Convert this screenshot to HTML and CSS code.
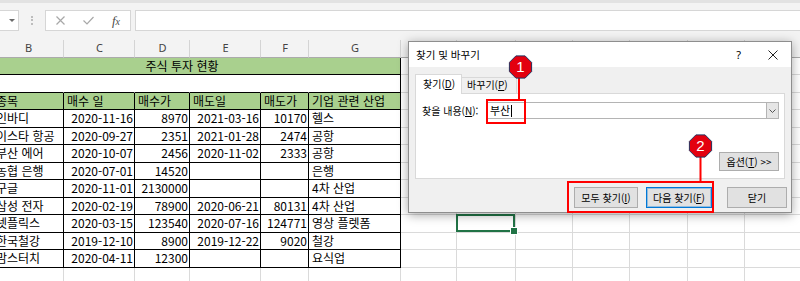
FILE: index.html
```html
<!DOCTYPE html>
<html lang="ko">
<head>
    <meta charset="UTF-8">
    <title>찾기 및 바꾸기</title>
    <link rel="stylesheet" href="styles.css">
</head>
<body>
<div class="app">
    <div class="top">
        <div class="formula-bar">
            <div class="name-box"><span class="arrow-down"></span></div>
            <div class="grip"></div>
            <div class="fx-tools">
                <span class="tool">
                    <svg width="9" height="9" viewBox="0 0 9 9"><path d="M0.5 0.5L8.5 8.5M8.5 0.5L0.5 8.5" stroke="#a8a8a8" stroke-width="1.2" fill="none"/></svg>
                </span>
                <span class="tool">
                    <svg width="11" height="9" viewBox="0 0 11 9"><path d="M0.5 4.5L4 8L10.5 1" stroke="#a8a8a8" stroke-width="1.2" fill="none"/></svg>
                </span>
                <span class="tool fx"><i>f</i><i class="fx-x">x</i></span>
            </div>
            <div class="formula-input"></div>
        </div>
    </div>

    <div class="sheet">
        <!-- column headers -->
        <div class="c colh">B</div><div class="c colh">C</div><div class="c colh">D</div><div class="c colh">E</div><div class="c colh">F</div><div class="c colh">G</div>
        <div class="c colh"></div><div class="c colh"></div><div class="c colh"></div><div class="c colh"></div><div class="c colh"></div><div class="c colh"></div><div class="c colh"></div>

        <!-- title -->
        <div class="c t green title">주식 투자 현황</div>
        <div class="c"></div><div class="c"></div><div class="c"></div><div class="c"></div><div class="c"></div><div class="c"></div><div class="c"></div>

        <!-- blank -->
        <div class="c blank"></div><div class="c blank"></div><div class="c blank"></div><div class="c blank"></div><div class="c blank"></div><div class="c blank last"></div>
        <div class="c"></div><div class="c"></div><div class="c"></div><div class="c"></div><div class="c"></div><div class="c"></div><div class="c"></div>

        <!-- table header -->
        <div class="c t green">종목</div><div class="c t green">매수 일</div><div class="c t green">매수가</div><div class="c t green">매도일</div><div class="c t green">매도가</div><div class="c t green">기업 관련 산업</div>
        <div class="c"></div><div class="c"></div><div class="c"></div><div class="c"></div><div class="c"></div><div class="c"></div><div class="c"></div>

        <div class="c t">인바디</div><div class="c t r">2020-11-16</div><div class="c t r">8970</div><div class="c t r">2021-03-16</div><div class="c t r">10170</div><div class="c t">헬스</div>
        <div class="c"></div><div class="c"></div><div class="c"></div><div class="c"></div><div class="c"></div><div class="c"></div><div class="c"></div>

        <div class="c t">이스타 항공</div><div class="c t r">2020-09-27</div><div class="c t r">2351</div><div class="c t r">2021-01-28</div><div class="c t r">2474</div><div class="c t">공항</div>
        <div class="c"></div><div class="c"></div><div class="c"></div><div class="c"></div><div class="c"></div><div class="c"></div><div class="c"></div>

        <div class="c t">부산 에어</div><div class="c t r">2020-10-07</div><div class="c t r">2456</div><div class="c t r">2020-11-02</div><div class="c t r">2333</div><div class="c t">공항</div>
        <div class="c"></div><div class="c"></div><div class="c"></div><div class="c"></div><div class="c"></div><div class="c"></div><div class="c"></div>

        <div class="c t">농협 은행</div><div class="c t r">2020-07-01</div><div class="c t r">14520</div><div class="c t r"></div><div class="c t r"></div><div class="c t">은행</div>
        <div class="c"></div><div class="c"></div><div class="c"></div><div class="c"></div><div class="c"></div><div class="c"></div><div class="c"></div>

        <div class="c t">구글</div><div class="c t r">2020-11-01</div><div class="c t r">2130000</div><div class="c t r"></div><div class="c t r"></div><div class="c t">4차 산업</div>
        <div class="c"></div><div class="c"></div><div class="c"></div><div class="c"></div><div class="c"></div><div class="c"></div><div class="c"></div>

        <div class="c t">삼성 전자</div><div class="c t r">2020-02-19</div><div class="c t r">78900</div><div class="c t r">2020-06-21</div><div class="c t r">80131</div><div class="c t">4차 산업</div>
        <div class="c"></div><div class="c"></div><div class="c"></div><div class="c"></div><div class="c"></div><div class="c"></div><div class="c"></div>

        <div class="c t">넷플릭스</div><div class="c t r">2020-03-15</div><div class="c t r">123540</div><div class="c t r">2020-07-16</div><div class="c t r">124771</div><div class="c t">영상 플렛폼</div>
        <div class="c"></div><div class="c sel"></div><div class="c"></div><div class="c"></div><div class="c"></div><div class="c"></div><div class="c"></div>

        <div class="c t">한국철강</div><div class="c t r">2019-12-10</div><div class="c t r">8900</div><div class="c t r">2019-12-22</div><div class="c t r">9020</div><div class="c t">철강</div>
        <div class="c"></div><div class="c"></div><div class="c"></div><div class="c"></div><div class="c"></div><div class="c"></div><div class="c"></div>

        <div class="c t">맘스터치</div><div class="c t r">2020-04-11</div><div class="c t r">12300</div><div class="c t r"></div><div class="c t r"></div><div class="c t">요식업</div>
        <div class="c"></div><div class="c"></div><div class="c"></div><div class="c"></div><div class="c"></div><div class="c"></div><div class="c"></div>

        <div class="c"></div><div class="c"></div><div class="c"></div><div class="c"></div><div class="c"></div><div class="c"></div>
        <div class="c"></div><div class="c"></div><div class="c"></div><div class="c"></div><div class="c"></div><div class="c"></div><div class="c"></div>
    </div>

    <div class="dialog">
        <div class="dlg-title">
            <span class="dlg-caption">찾기 및 바꾸기</span>
            <span class="dlg-help">?</span>
            <svg class="dlg-close" width="10" height="10" viewBox="0 0 10 10"><path d="M0.5 0.5L9.5 9.5M9.5 0.5L0.5 9.5" stroke="#222" stroke-width="1" fill="none"/></svg>
        </div>
        <div class="tabs">
            <div class="tab active">찾기(<u>D</u>)</div>
            <div class="tab">바꾸기(<u>P</u>)</div>
        </div>
        <div class="panel">
            <div class="find-row">
                <span class="find-label">찾을 내용(<u>N</u>):</span>
                <div class="combo">
                    <span class="combo-text">부산</span><span class="text-caret"></span>
                    <span class="combo-btn">
                        <svg width="7" height="4" viewBox="0 0 7 4"><path d="M0.5 0.5L3.5 3.5L6.5 0.5" stroke="#555" fill="none"/></svg>
                    </span>
                </div>
            </div>
            <div class="opt-row">
                <button class="btn btn-opt">옵션(<u>T</u>) &gt;&gt;</button>
            </div>
        </div>
        <div class="btn-row">
            <button class="btn btn-all">모두 찾기(<u>I</u>)</button>
            <button class="btn btn-next">다음 찾기(<u>F</u>)</button>
            <button class="btn btn-close">닫기</button>
        </div>
    </div>

    <svg class="marks" width="800" height="281" viewBox="0 0 800 281">
        <rect x="487" y="100" width="38" height="23" fill="none" stroke="#ff0000" stroke-width="2"/>
        <line x1="519" y1="78" x2="519" y2="100" stroke="#ff0000" stroke-width="2"/>
        <polygon points="525.1,55.9 531.6,62.4 531.6,71.6 525.1,78.1 515.9,78.1 509.4,71.6 509.4,62.4 515.9,55.9" fill="#e3000f" stroke="#23305c" stroke-width="1"/>
        <text class="badge-num" x="520.5" y="72.3" text-anchor="middle">1</text>

        <rect x="568" y="182" width="145" height="30" fill="none" stroke="#ff0000" stroke-width="2"/>
        <line x1="700.5" y1="157" x2="700.5" y2="182" stroke="#ff0000" stroke-width="2"/>
        <polygon points="705.1,134.9 711.6,141.4 711.6,150.6 705.1,157.1 695.9,157.1 689.4,150.6 689.4,141.4 695.9,134.9" fill="#e3000f" stroke="#23305c" stroke-width="1"/>
        <text class="badge-num" x="700.5" y="151.3" text-anchor="middle">2</text>
    </svg>
</div>
</body>
</html>
```

FILE: styles.css
```css
* {
    box-sizing: border-box;
}
body {
    margin: 0;
    width: 800px;
    height: 281px;
    overflow: hidden;
    background: #fff;
    font-family: "Noto Sans CJK KR", sans-serif;
    color: #000;
}
.app {
    position: relative;
    width: 800px;
    height: 281px;
    overflow: hidden;
}

/* formula bar */
.top {
    background: #f3f3f3;
    border-top: 3px solid #e2e2e2;
    padding: 7px 0 9px;
}
.formula-bar {
    display: flex;
    height: 21px;
}
.name-box {
    width: 19px;
    background: #fff;
    border: 1px solid #d6d6d6;
    border-left: none;
    display: flex;
    align-items: center;
    justify-content: flex-end;
    padding-right: 3px;
}
.arrow-down {
    width: 0;
    height: 0;
    border-left: 3px solid transparent;
    border-right: 3px solid transparent;
    border-top: 3px solid #6a6a6a;
}
.grip {
    width: 26px;
    display: flex;
    align-items: center;
    justify-content: center;
}
.grip::before {
    content: "";
    height: 9px;
    border-left: 2px dotted #bdbdbd;
}
.fx-tools {
    width: 86px;
    background: #fff;
    border: 1px solid #d6d6d6;
    display: flex;
    align-items: center;
}
.tool {
    width: 28px;
    display: flex;
    justify-content: center;
    align-items: center;
}
.fx {
    font-family: "Liberation Serif", serif;
    font-size: 13px;
    color: #4a4a4a;
    line-height: 1;
}
.fx-x {
    font-size: 10px;
    position: relative;
    top: 1px;
}
.formula-input {
    flex: 1;
    margin-left: 4px;
    background: #fff;
    border: 1px solid #d6d6d6;
    border-right: none;
}

/* sheet */
.sheet {
    display: grid;
    grid-template-columns: 71px 71px 55px 71px 48px 92px 56px 59px 57px 57px 58px 57px 57px;
    grid-auto-rows: 17.5px;
    margin-left: -7px;
    font-size: 12px;
}
.c {
    border-right: 1px solid #dadada;
    border-bottom: 1px solid #dadada;
    padding: 0 2px 0 3px;
    line-height: 16.5px;
    white-space: nowrap;
    overflow: hidden;
}
.colh {
    background: #f3f3f3;
    border-right-color: #d4d4d4;
    border-bottom-color: #ababab;
    text-align: center;
    font-family: "Noto Sans", sans-serif;
    font-size: 11px;
    color: #444;
}
.t {
    border-right-color: #000;
    border-bottom-color: #000;
}
.green {
    background: #a9d08e;
}
.title {
    grid-column: span 6;
    text-align: center;
    padding-right: 32px;
}
.blank {
    border-right-color: #fff;
    border-bottom-color: #000;
}
.blank.last {
    border-right-color: #000;
}
.r {
    text-align: right;
    padding-right: 1px;
}
.sel {
    position: relative;
    overflow: visible;
}
.sel::after {
    content: "";
    position: absolute;
    left: -1px;
    top: -1px;
    right: 0;
    bottom: 0;
    border: 2px solid #217346;
}
.sel::before {
    content: "";
    position: absolute;
    right: -3px;
    bottom: -3px;
    width: 6px;
    height: 6px;
    background: #217346;
    border: 1px solid #fff;
    z-index: 1;
}

/* find dialog */
.dialog {
    position: absolute;
    left: 408px;
    top: 41px;
    width: 384px;
    height: 172px;
    background: #f0f0f0;
    border: 1px solid #8e8e8e;
    box-shadow: 0 2px 10px rgba(0, 0, 0, 0.35);
    font-size: 10px;
    z-index: 2;
}
.dlg-title {
    height: 25px;
    background: #fff;
    display: flex;
    align-items: center;
    padding-left: 7px;
}
.dlg-caption {
    flex: 1;
    font-size: 10.5px;
}
.dlg-help {
    font-family: "Noto Sans", sans-serif;
    font-size: 11px;
    margin-right: 27px;
}
.dlg-close {
    margin-right: 13px;
}
.tabs {
    display: flex;
    align-items: flex-end;
    margin-top: 6px;
    padding-left: 6px;
    height: 20px;
}
.tab {
    height: 16px;
    width: 55px;
    padding-left: 5px;
    line-height: 14px;
    border: 1px solid #d9d9d9;
    border-left: none;
    border-bottom: none;
    background: #f0f0f0;
    white-space: nowrap;
}
.tab.active {
    height: 20px;
    width: 47px;
    padding-left: 7px;
    line-height: 18px;
    background: #fff;
    border-left: 1px solid #d9d9d9;
    position: relative;
    z-index: 1;
    margin-bottom: -1px;
}
.panel {
    margin: 0 6px;
    height: 86px;
    background: #fff;
    border: 1px solid #d9d9d9;
}
.find-row {
    display: flex;
    align-items: center;
    margin-top: 8px;
    height: 17px;
    padding-left: 6px;
}
.find-label {
    width: 65px;
}
.combo {
    flex: 1;
    height: 17px;
    margin-right: 5px;
    border: 1px solid #b4b4b4;
    display: flex;
    align-items: center;
    padding-left: 2px;
    font-size: 11px;
}
.combo-text {
    line-height: 15px;
}
.text-caret {
    width: 1px;
    height: 12px;
    background: #000;
    margin-left: 1px;
}
.combo-btn {
    margin-left: auto;
    width: 12px;
    height: 15px;
    background: #e6e6e6;
    border-left: 1px solid #b4b4b4;
    display: flex;
    align-items: center;
    justify-content: center;
}
.opt-row {
    display: flex;
    justify-content: flex-end;
    margin-top: 33px;
    padding-right: 5px;
}
.btn {
    font-family: "Noto Sans CJK KR", sans-serif;
    font-size: 10px;
    color: #000;
    background: #e1e1e1;
    border: 1px solid #adadad;
    padding: 0;
    margin: 0;
    height: 21px;
}
.btn-opt {
    width: 60px;
    height: 19px;
}
.btn-row {
    display: flex;
    justify-content: flex-end;
    margin-top: 8px;
    padding-right: 4px;
}
.btn-all {
    width: 64px;
}
.btn-next {
    width: 66px;
    margin-left: 8px;
    border-color: #0078d7;
    box-shadow: inset 0 0 0 1px rgba(0, 120, 215, 0.35);
}
.btn-close {
    width: 60px;
    margin-left: 15px;
}

/* annotation marks */
.marks {
    position: absolute;
    left: 0;
    top: 0;
    z-index: 3;
    pointer-events: none;
}
.badge-num {
    font-family: "Liberation Sans", sans-serif;
    font-size: 15px;
    fill: #fff;
}
```
